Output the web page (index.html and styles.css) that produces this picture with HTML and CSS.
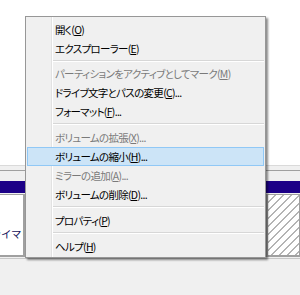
FILE: index.html
```html
<!DOCTYPE html>
<html lang="ja">
<head>
    <meta charset="UTF-8">
    <title>ディスクの管理</title>
    <link rel="stylesheet" href="styles.css">
</head>
<body>
    <div class="screen">
        <!-- Volume list (top pane) -->
        <div class="volumes"></div>
        <div class="splitter"></div>

        <!-- Graphical disk view -->
        <div class="disk">
            <div class="part part-left">
                <div class="part-bar"></div>
                <div class="part-body"><span class="part-text">プライマリ</span></div>
            </div>
            <div class="part part-mid">
                <div class="part-bar"></div>
                <div class="part-body"></div>
            </div>
            <div class="part part-free">
                <div class="part-bar"></div>
                <div class="part-body hatch"></div>
            </div>
        </div>
        <div class="status"></div>

        <!-- Context menu -->
        <ul class="menu">
            <li class="item">開く(<u>O</u>)</li>
            <li class="item">エクスプローラー(<u>E</u>)</li>
            <li class="sep"></li>
            <li class="item off">パーティションをアクティブとしてマーク(<u>M</u>)</li>
            <li class="item">ドライブ文字とパスの変更(<u>C</u>)...</li>
            <li class="item">フォーマット(<u>F</u>)...</li>
            <li class="sep"></li>
            <li class="item off">ボリュームの拡張(<u>X</u>)...</li>
            <li class="item hot">ボリュームの縮小(<u>H</u>)...</li>
            <li class="item off">ミラーの追加(<u>A</u>)...</li>
            <li class="item">ボリュームの削除(<u>D</u>)...</li>
            <li class="sep"></li>
            <li class="item">プロパティ(<u>P</u>)</li>
            <li class="sep"></li>
            <li class="item">ヘルプ(<u>H</u>)</li>
        </ul>
    </div>
</body>
</html>
```

FILE: styles.css
```css
body {
    margin: 0;
    padding: 0;
    font-family: "Noto Sans CJK JP", "Noto Sans", sans-serif;
    font-size: 11px;
    background-color: #f0f0f0;
}
.screen {
    position: relative;
    width: 300px;
    height: 295px;
    overflow: hidden;
}
.volumes {
    height: 165px;
    background-color: #ffffff;
}
.splitter {
    height: 4px;
    border-top: 1px solid #dadada;
    border-bottom: 1px solid #a0a0a0;
    background-color: #f0f0f0;
}
.disk {
    display: flex;
    height: 76px;
    padding: 10px 0 1px;
}
.part {
    display: flex;
    flex-direction: column;
}
.part-left {
    width: 24px;
}
.part-mid {
    flex: 1;
}
.part-free {
    width: 34px;
}
.part-bar {
    height: 12px;
    background-color: #1c0087;
}
.part-body {
    flex: 1;
    margin-top: 1px;
    background-color: #ffffff;
    border: 1px solid #a0a0a0;
    border-bottom-width: 2px;
    overflow: hidden;
    position: relative;
}
.part-left .part-body {
    border-left: 0;
}
.part-text {
    position: absolute;
    right: -8px;
    top: 31px;
    white-space: nowrap;
    font-size: 10.5px;
    letter-spacing: -0.5px;
    color: #10105a;
}
.hatch {
    border-left-width: 2px;
    background: repeating-linear-gradient(135deg, #ffffff 0 4.5px, #b4b4b4 4.5px 5.7px);
}
.status {
    height: 37px;
    border-top: 1px solid #c8c8c8;
    background-color: #f0f0f0;
}
.menu {
    position: absolute;
    left: 25px;
    top: 16px;
    width: 239px;
    margin: 0;
    padding: 3px 0 1px;
    list-style: none;
    background-color: #f0f0f0;
    border: 1px solid #979797;
    box-shadow: 2px 2px 2px rgba(0, 0, 0, 0.45);
}
.menu::before {
    content: "";
    position: absolute;
    left: 25px;
    top: 0;
    bottom: 0;
    width: 1px;
    background-color: #e2e2e2;
    border-right: 1px solid #ffffff;
}
.item {
    position: relative;
    height: 19px;
    margin: 0 1px;
    padding-left: 27px;
    box-sizing: border-box;
    border: 1px solid transparent;
    line-height: 17px;
    font-size: 10.5px;
    letter-spacing: -0.7px;
    color: #000000;
    font-feature-settings: "palt";
    white-space: nowrap;
}
.item u {
    text-decoration-thickness: 1px;
    text-underline-offset: 1px;
}
.off {
    color: #7a7a7a;
}
.hot {
    background-color: #cce4f7;
    border-color: #90c8f6;
}
.sep {
    position: relative;
    height: 6px;
    margin-left: 27px;
    margin-right: 1px;
}
.sep:nth-child(n+7) {
    height: 7px;
}
.sep::after {
    content: "";
    position: absolute;
    left: 0;
    right: 0;
    top: 2px;
    height: 1px;
    background-color: #d7d7d7;
    border-bottom: 1px solid #ffffff;
}
```
